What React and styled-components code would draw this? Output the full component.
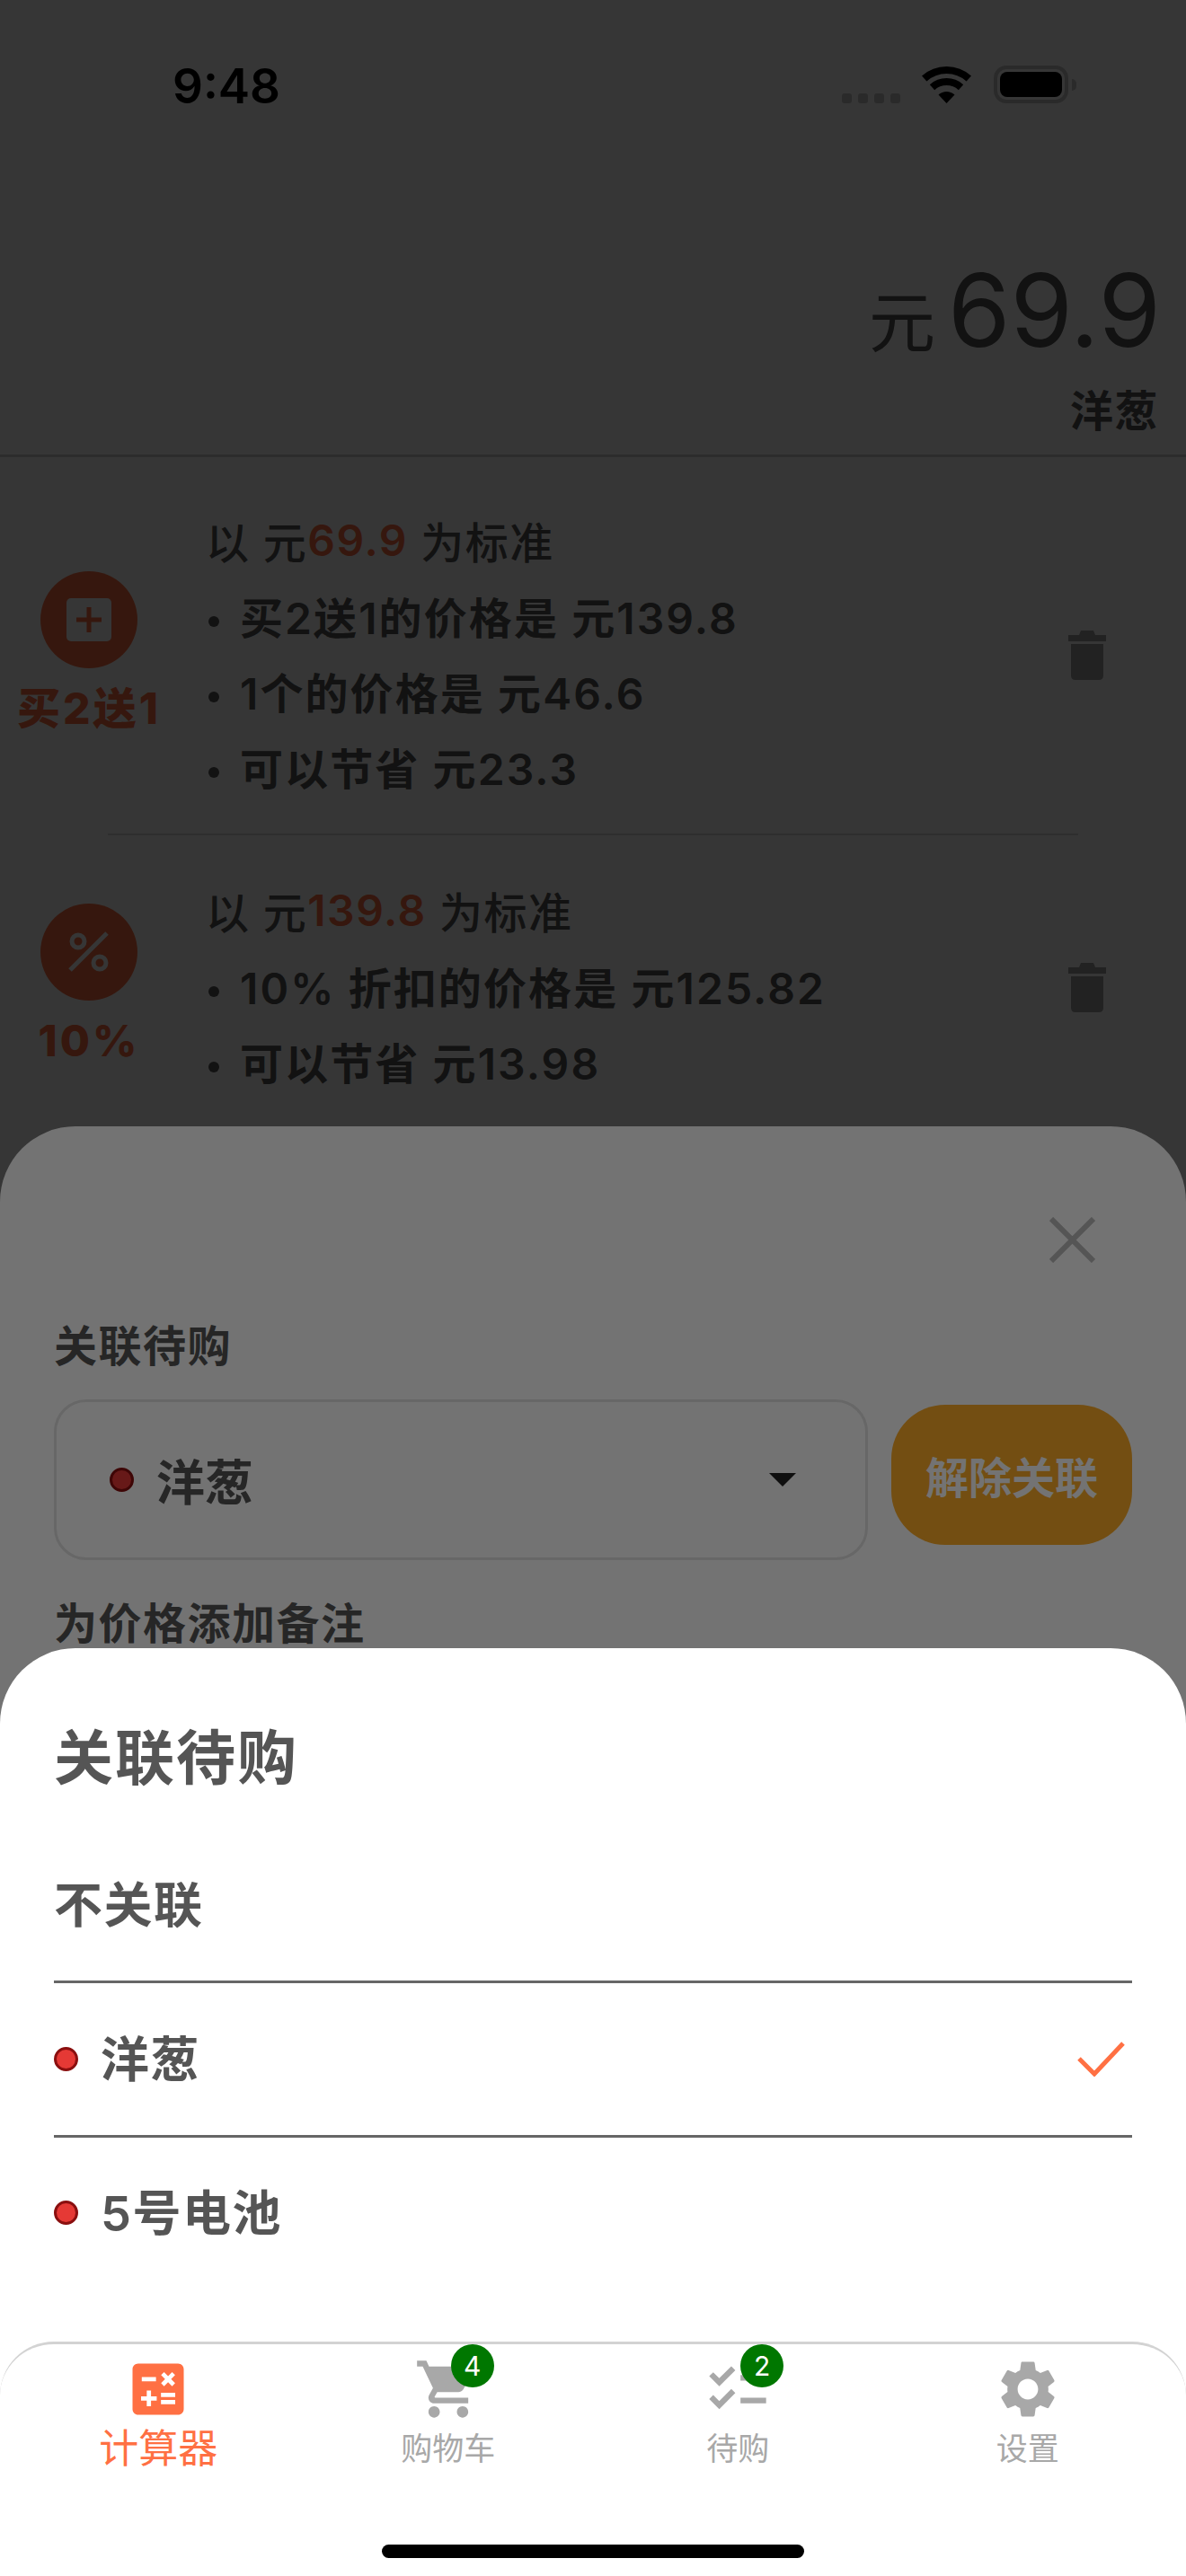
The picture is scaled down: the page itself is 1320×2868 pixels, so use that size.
import React from 'react'
import styled, { createGlobalStyle } from 'styled-components'
import { MdCalculate, MdShoppingCart, MdChecklist, MdSettings } from 'react-icons/md'

const orange = '#ff7043'
const ink = '#555555'

const GlobalStyle = createGlobalStyle`
  html, body {
    margin: 0;
    padding: 0;
    background: #fff;
    font-family: Inter, "Noto Sans CJK SC", sans-serif;
  }
`

const Phone = styled.div`
  position: relative;
  width: 1320px;
  height: 2868px;
  overflow: hidden;
  background: #fff;
  color: ${ink};
`

const StatusBar = styled.div`
  display: flex;
  justify-content: space-between;
  align-items: flex-start;
  height: 282px;
  padding: 75px 131px 0 192px;
  box-sizing: border-box;
`

const Clock = styled.div`
  font-size: 53px;
  line-height: 42px;
  font-weight: 600;
  color: #000;
`

const StatusIcons = styled.div`
  display: flex;
  align-items: flex-end;
  height: 42px;
  margin-top: -2px;
`

const SignalDots = styled.div`
  display: flex;
  gap: 7px;
  margin-right: 23px;
`

const SignalDot = styled.span`
  width: 11px;
  height: 11px;
  border-radius: 3px;
  background: #c8c8c8;
`

const Battery = styled.div`
  position: relative;
  box-sizing: border-box;
  width: 83px;
  height: 42px;
  margin-left: 24px;
  padding: 3px;
  border: 4px solid #c8c8c8;
  border-radius: 14px;

  &::before {
    content: '';
    display: block;
    height: 100%;
    border-radius: 8px;
    background: #000;
  }

  &::after {
    content: '';
    position: absolute;
    right: -13px;
    top: 11px;
    width: 5px;
    height: 13px;
    border-radius: 0 5px 5px 0;
    background: #c8c8c8;
  }
`

const PriceHeader = styled.header`
  display: flex;
  flex-direction: column;
  align-items: flex-end;
  height: 227px;
  padding-right: 28px;
  box-sizing: border-box;
  border-bottom: 3px solid #d0d0d0;
`

const Price = styled.div`
  display: flex;
  align-items: baseline;
  height: 126px;
  line-height: 126px;
  gap: 14px;
`

const Currency = styled.span`
  font-size: 74px;
`

const Amount = styled.span`
  font-size: 112px;
`

const PriceName = styled.div`
  margin: 20px 2px 0 0;
  font-size: 48px;
  line-height: 60px;
  font-weight: 600;
  letter-spacing: 1.5px;
`

const DiscountList = styled.div`
  padding-top: 62px;
`

const Row = styled.section`
  display: flex;
  align-items: center;
  padding-right: 89px;
  margin-top: ${p => (p.$first ? 0 : 53)}px;
`

const TypeColumn = styled.div`
  display: flex;
  flex-direction: column;
  align-items: center;
  flex: none;
  width: 198px;
  margin-right: 31px;
`

const TypeCircle = styled.div`
  display: flex;
  align-items: center;
  justify-content: center;
  width: 108px;
  height: 108px;
  border-radius: 50%;
  background: ${orange};
`

const TypeLabel = styled.div`
  margin-top: 15px;
  font-size: 48px;
  line-height: 60px;
  font-weight: 800;
  letter-spacing: 3px;
  color: ${orange};
  white-space: nowrap;
`

const Lines = styled.div`
  flex: 1;
  display: flex;
  flex-direction: column;
  gap: 24px;
`

const Line = styled.div`
  display: flex;
  align-items: center;
  height: 60px;
  font-size: 48px;
  font-weight: ${p => (p.$plain ? 500 : 600)};
  letter-spacing: ${p => (p.$plain ? 1.5 : 2.1)}px;
  white-space: pre;
`

const Bullet = styled.span`
  width: 12px;
  height: 12px;
  margin: 14px 23px 0 3px;
  border-radius: 50%;
  background: ${ink};
`

const BaseValue = styled.span`
  color: ${orange};
  font-weight: 600;
`

const RowDivider = styled.div`
  height: 2px;
  margin: 45px 120px 0;
  background: #dcdcdc;
`

const Trash = styled.svg`
  flex: none;
  margin-top: 4px;
`

const Scrim = styled.div`
  position: absolute;
  inset: 0;
  background: rgba(0, 0, 0, ${p => p.$alpha});
`

const Sheet = styled.div`
  position: absolute;
  left: 0;
  right: 0;
  bottom: 0;
  top: ${p => p.$top}px;
  box-sizing: border-box;
  padding: 0 60px;
  border-radius: 84px 84px 0 0;
  background: #fff;
`

const CloseRow = styled.div`
  display: flex;
  justify-content: flex-end;
  padding: 101px 41px 0 0;
  height: 51px;
`

const FieldLabel = styled.div`
  font-size: 48px;
  line-height: 60px;
  font-weight: 600;
  letter-spacing: 1.5px;
  margin-top: ${p => p.$top}px;
`

const LinkRow = styled.div`
  display: flex;
  align-items: center;
  gap: 26px;
  margin-top: 29px;
`

const Select = styled.div`
  display: flex;
  align-items: center;
  box-sizing: border-box;
  width: 906px;
  height: 179px;
  padding: 0 77px 0 59px;
  border: 3px solid #e4e4e4;
  border-radius: 36px;
  font-size: 54px;
  font-weight: 600;
`

const ColorDot = styled.span`
  flex: none;
  box-sizing: border-box;
  width: 27px;
  height: 27px;
  margin-right: 25px;
  border-radius: 50%;
  border: 3px solid #8a0f0f;
  background: #e53935;
`

const Caret = styled.span`
  margin-left: auto;
  width: 0;
  height: 0;
  border-left: 15px solid transparent;
  border-right: 15px solid transparent;
  border-top: 15px solid #222;
`

const UnlinkButton = styled.button`
  width: 268px;
  height: 156px;
  margin-bottom: 11px;
  padding: 0;
  border: 0;
  border-radius: 60px;
  background: #ffad28;
  color: #fff;
  font-family: inherit;
  font-size: 48px;
  font-weight: 600;
`

const PickerTitle = styled.div`
  padding-top: 82px;
  margin-bottom: 39px;
  font-size: 66px;
  line-height: 80px;
  font-weight: 600;
  letter-spacing: 2px;
`

const Option = styled.div`
  display: flex;
  align-items: center;
  box-sizing: border-box;
  height: 172px;
  padding: 0 8px ${p => (p.$last ? 12 : 6)}px 0;
  font-size: 54px;
  font-weight: 600;
  letter-spacing: 1.5px;
  border-bottom: ${p => (p.$last ? 'none' : '3px solid #666')};

  ${ColorDot} {
    margin-top: 6px;
  }
`

const OptionCheck = styled.svg`
  margin-left: auto;
  margin-top: 6px;
`

const TabBar = styled.nav`
  position: absolute;
  left: 0;
  right: 0;
  bottom: 0;
  height: 261px;
  box-sizing: border-box;
  display: grid;
  grid-template-columns: repeat(4, 1fr);
  padding: 0 15px;
  background: #fff;
  border-top: 3px solid #d3d3d3;
  border-radius: 60px 60px 0 0;
`

const Tab = styled.div`
  position: relative;
  display: flex;
  flex-direction: column;
  align-items: center;
  padding-top: 12px;
  color: ${p => (p.$active ? orange : '#a8a8a8')};
`

const TabLabel = styled.div`
  margin-top: 3px;
  font-size: ${p => (p.$active ? 44 : 35)}px;
  line-height: 50px;
`

const CountBadge = styled.span`
  position: absolute;
  left: calc(50% + 3px);
  top: 0;
  display: flex;
  align-items: center;
  justify-content: center;
  width: 48px;
  height: 48px;
  border-radius: 50%;
  background: #007700;
  color: #fff;
  font-size: 30px;
`

const HomeBar = styled.div`
  position: absolute;
  left: 425px;
  bottom: 20px;
  width: 470px;
  height: 15px;
  border-radius: 8px;
  background: #000;
`

const WifiIcon = () => (
  <svg width="57" height="42" viewBox="0 0 57 42">
    <path d="M3.7 14.5A37 37 0 0 1 53.3 14.5" fill="none" stroke="#000" strokeWidth="8" />
    <path d="M12.5 24.2A24 24 0 0 1 44.5 24.2" fill="none" stroke="#000" strokeWidth="8" />
    <path d="M28.5 42L19.5 32.6A13 13 0 0 1 37.5 32.6Z" fill="#000" />
  </svg>
)

const PlusBoxIcon = () => (
  <svg width="50" height="48" viewBox="0 0 50 48">
    <rect width="50" height="48" rx="5" fill="#fff" />
    <path d="M11 24H39M25 10V38" stroke={orange} strokeWidth="5" fill="none" />
  </svg>
)

const PercentIcon = () => (
  <svg width="46" height="46" viewBox="0 0 46 46">
    <circle cx="11" cy="11" r="7" fill="none" stroke="#fff" strokeWidth="5" />
    <circle cx="35" cy="35" r="7" fill="none" stroke="#fff" strokeWidth="5" />
    <path d="M2 43L43 2" stroke="#fff" strokeWidth="5" fill="none" />
  </svg>
)

const TrashIcon = () => (
  <Trash width="42" height="55" viewBox="0 0 42 55">
    <path d="M0 5H12L14 0H28L30 5H42V12H0Z" fill="#a2a2a2" />
    <path d="M3 15H39V50Q39 55 34 55H8Q3 55 3 50Z" fill="#a2a2a2" />
  </Trash>
)

const CloseIcon = () => (
  <svg width="51" height="51" viewBox="0 0 51 51">
    <path d="M2 2L49 49M49 2L2 49" stroke="#bcbcbc" strokeWidth="6" fill="none" />
  </svg>
)

const discounts = [
  {
    label: '买2送1',
    icon: <PlusBoxIcon />,
    base: '69.9',
    lines: ['买2送1的价格是 元139.8', '1个的价格是 元46.6', '可以节省 元23.3'],
  },
  {
    label: '10%',
    icon: <PercentIcon />,
    base: '139.8',
    lines: ['10% 折扣的价格是 元125.82', '可以节省 元13.98'],
  },
]

const tabs = [
  { label: '计算器', Icon: MdCalculate, active: true },
  { label: '购物车', Icon: MdShoppingCart, count: 4 },
  { label: '待购', Icon: MdChecklist, count: 2 },
  { label: '设置', Icon: MdSettings },
]

const App = () => (
  <Phone>
    <GlobalStyle />

    <StatusBar>
      <Clock>9:48</Clock>
      <StatusIcons>
        <SignalDots>
          <SignalDot />
          <SignalDot />
          <SignalDot />
          <SignalDot />
        </SignalDots>
        <WifiIcon />
        <Battery />
      </StatusIcons>
    </StatusBar>

    <PriceHeader>
      <Price>
        <Currency>元</Currency>
        <Amount>69.9</Amount>
      </Price>
      <PriceName>洋葱</PriceName>
    </PriceHeader>

    <DiscountList>
      {discounts.map((d, i) => (
        <React.Fragment key={d.label}>
          {i > 0 && <RowDivider />}
          <Row $first={i === 0}>
            <TypeColumn>
              <TypeCircle>{d.icon}</TypeCircle>
              <TypeLabel>{d.label}</TypeLabel>
            </TypeColumn>
            <Lines>
              <Line $plain>
                以 元<BaseValue>{d.base}</BaseValue> 为标准
              </Line>
              {d.lines.map(text => (
                <Line key={text}>
                  <Bullet />
                  {text}
                </Line>
              ))}
            </Lines>
            <TrashIcon />
          </Row>
        </React.Fragment>
      ))}
    </DiscountList>

    <Scrim $alpha={0.53} />

    <Sheet $top={1254}>
      <CloseRow>
        <CloseIcon />
      </CloseRow>
      <FieldLabel $top={63}>关联待购</FieldLabel>
      <LinkRow>
        <Select>
          <ColorDot />
          洋葱
          <Caret />
        </Select>
        <UnlinkButton>解除关联</UnlinkButton>
      </LinkRow>
      <FieldLabel $top={41}>为价格添加备注</FieldLabel>
    </Sheet>

    <Scrim $alpha={0.55} />

    <Sheet $top={1835}>
      <PickerTitle>关联待购</PickerTitle>
      <Option>不关联</Option>
      <Option>
        <ColorDot />
        洋葱
        <OptionCheck width="53" height="39" viewBox="0 0 53 39">
          <path d="M2 19L19 36L51 2" stroke={orange} strokeWidth="5" fill="none" />
        </OptionCheck>
      </Option>
      <Option $last>
        <ColorDot />
        5号电池
      </Option>
    </Sheet>

    <TabBar>
      {tabs.map(({ label, Icon, active, count }) => (
        <Tab key={label} $active={active}>
          <Icon size={76} />
          <TabLabel $active={active}>{label}</TabLabel>
          {count && <CountBadge>{count}</CountBadge>}
        </Tab>
      ))}
    </TabBar>
    <HomeBar />
  </Phone>
)

export default App
